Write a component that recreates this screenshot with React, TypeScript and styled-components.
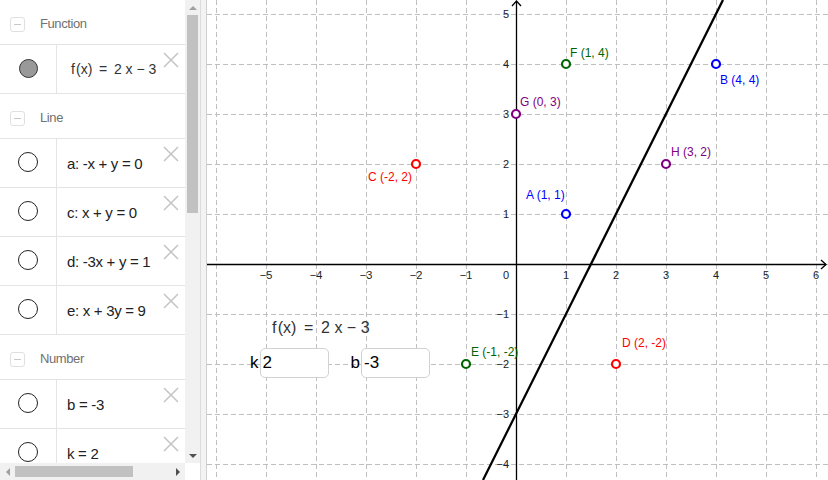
import React from 'react'
import styled, { createGlobalStyle } from 'styled-components'

const GlobalStyle = createGlobalStyle`
  html, body {
    margin: 0;
    padding: 0;
  }
  body {
    width: 828px;
    height: 480px;
    overflow: hidden;
    background: #fff;
    font-family: 'Liberation Sans', Arial, sans-serif;
  }
`

type Item = { label: string; filled?: boolean }
type Group = { title: string; items: Item[] }

// GeoGebra style formula spacing: hair / thin spaces between the tokens
const FORMULA = 'f\u200A(x) \u2009= \u20092 x − 3'

const groups: Group[] = [
  { title: 'Function', items: [{ label: FORMULA, filled: true }] },
  {
    title: 'Line',
    items: [{ label: 'a: -x + y = 0' }, { label: 'c: x + y = 0' }, { label: 'd: -3x + y = 1' }, { label: 'e: x + 3y = 9' }],
  },
  { title: 'Number', items: [{ label: 'b = -3' }, { label: 'k = 2' }] },
]

// graph coordinates -> page pixels
const px = (x: number) => 516 + 50 * x
const py = (y: number) => 264 - 50 * y

type Pt = { name: string; x: number; y: number; color: string; dx: number; dy: number }

const points: Pt[] = [
  { name: 'A', x: 1, y: 1, color: '#0000ff', dx: -40, dy: -15 },
  { name: 'B', x: 4, y: 4, color: '#0000ff', dx: 4, dy: 20 },
  { name: 'C', x: -2, y: 2, color: '#ff0000', dx: -48, dy: 17 },
  { name: 'D', x: 2, y: -2, color: '#ff0000', dx: 6, dy: -17 },
  { name: 'E', x: -1, y: -2, color: '#006400', dx: 5, dy: -8 },
  { name: 'F', x: 1, y: 4, color: '#006400', dx: 4, dy: -7 },
  { name: 'G', x: 0, y: 3, color: '#800080', dx: 4, dy: -8 },
  { name: 'H', x: 3, y: 2, color: '#800080', dx: 5, dy: -8 },
]

const fmt = (n: number) => (n < 0 ? `-${-n}` : `${n}`)
const axisNum = (n: number) => (n < 0 ? `\u2212${-n}` : `${n}`)

function Graph() {
  const xs = [-6, -5, -4, -3, -2, -1, 0, 1, 2, 3, 4, 5, 6]
  const ys = [5, 4, 3, 2, 1, 0, -1, -2, -3, -4]
  return (
    <svg width="621" height="480" viewBox="207 0 621 480">
      <g stroke="#c0c0c0" strokeWidth="1" strokeDasharray="5 3">
        {xs.map((x) => (
          <line key={`vx${x}`} x1={px(x) + 0.5} y1={0} x2={px(x) + 0.5} y2={480} />
        ))}
        {ys.map((y) => (
          <line key={`hy${y}`} x1={207} y1={py(y) + 0.5} x2={828} y2={py(y) + 0.5} />
        ))}
      </g>
      <g stroke="#000" strokeWidth="1.3" fill="none">
        <line x1={207} y1={264.5} x2={826} y2={264.5} />
        <line x1={516.5} y1={1} x2={516.5} y2={480} />
        <polyline points="821,260 826,264.5 821,269" />
        <polyline points="512,6 516.5,1 521,6" />
      </g>
      <g fontFamily="'Liberation Sans', Arial, sans-serif" fontSize="11" fill="#222">
        {xs
          .filter((x) => x !== 0 && x !== -6)
          .map((x) => (
            <text key={`lx${x}`} x={px(x)} y={279} textAnchor="middle">
              {axisNum(x)}
            </text>
          ))}
        <text x={509} y={279} textAnchor="end">
          0
        </text>
        {ys
          .filter((y) => y !== 0)
          .map((y) => (
            <text key={`ly${y}`} x={509} y={py(y) + 4} textAnchor="end">
              {axisNum(y)}
            </text>
          ))}
      </g>
      <line x1={px(-0.66)} y1={py(-4.32)} x2={px(4.14)} y2={py(5.28)} stroke="#000" strokeWidth="2.3" />
      <g fontFamily="'Liberation Sans', Arial, sans-serif" fontSize="12">
        {points.map((p) => (
          <g key={p.name}>
            <circle cx={px(p.x)} cy={py(p.y)} r="4" fill="#fff" stroke={p.color} strokeWidth="2.2" />
            <text x={px(p.x) + p.dx} y={py(p.y) + p.dy} fill={p.color}>
              {`${p.name} (${fmt(p.x)}, ${fmt(p.y)})`}
            </text>
          </g>
        ))}
      </g>
    </svg>
  )
}

function CloseIcon() {
  return (
    <svg width="16" height="16" viewBox="0 0 16 16">
      <path d="M1 1 L15 15 M15 1 L1 15" stroke="#c4c4c4" strokeWidth="1.5" fill="none" />
    </svg>
  )
}

export default function App() {
  return (
    <>
      <GlobalStyle />
      <Screen>
        <Sidebar>
          <SidebarBody>
            <AlgebraList>
              {groups.map((g) => (
                <React.Fragment key={g.title}>
                  <GroupHeader>
                    <CollapseBox />
                    <GroupTitle>{g.title}</GroupTitle>
                  </GroupHeader>
                  {g.items.map((it) => (
                    <ItemRow key={it.label}>
                      <MarbleCell>
                        <Marble $filled={it.filled} />
                      </MarbleCell>
                      <ItemText $math={it.filled}>{it.label}</ItemText>
                      <DeleteButton>
                        <CloseIcon />
                      </DeleteButton>
                    </ItemRow>
                  ))}
                </React.Fragment>
              ))}
            </AlgebraList>
            <VScroll>
              <ArrowCell>
                <Arrow $dir="up" />
              </ArrowCell>
              <VThumb />
              <VTrackRest />
              <ArrowCell>
                <Arrow $dir="down" />
              </ArrowCell>
            </VScroll>
          </SidebarBody>
          <HScrollRow>
            <HScroll>
              <ArrowCell>
                <Arrow $dir="left" />
              </ArrowCell>
              <HThumb />
              <HTrackRest />
              <ArrowCell>
                <Arrow $dir="right" />
              </ArrowCell>
            </HScroll>
            <Corner />
          </HScrollRow>
        </Sidebar>
        <Splitter />
        <GraphView>
          <Graph />
          <CanvasFormula>{FORMULA}</CanvasFormula>
          <InputRow>
            <InputLabel>k</InputLabel>
            <InputBox>2</InputBox>
            <InputLabel $gap>b</InputLabel>
            <InputBox>-3</InputBox>
          </InputRow>
        </GraphView>
      </Screen>
    </>
  )
}

const Screen = styled.div`
  display: flex;
  width: 828px;
  height: 480px;
  overflow: hidden;
`

const Sidebar = styled.div`
  width: 200px;
  height: 480px;
  display: flex;
  flex-direction: column;
  flex-shrink: 0;
`

const SidebarBody = styled.div`
  display: flex;
  height: 463px;
`

const AlgebraList = styled.div`
  width: 185px;
  height: 463px;
  overflow: hidden;
  background: #fff;
`

const GroupHeader = styled.div`
  box-sizing: border-box;
  display: flex;
  align-items: center;
  height: 45px;
  padding: 3px 0 0 10px;
  border-bottom: 1px solid #e4e4e4;
`

const CollapseBox = styled.div`
  position: relative;
  width: 13px;
  height: 13px;
  border: 1px solid #e0e0e0;
  border-radius: 3px;
  margin-top: 1px;
  &::after {
    content: '';
    position: absolute;
    left: 3px;
    top: 6px;
    width: 7px;
    height: 1px;
    background: #c8c8c8;
  }
`

const GroupTitle = styled.span`
  margin-left: 15px;
  font-family: 'Liberation Sans', Arial, sans-serif;
  font-size: 13px;
  letter-spacing: -0.4px;
  color: #707070;
`

const ItemRow = styled.div`
  display: flex;
  height: 48px;
  border-bottom: 1px solid #e4e4e4;
`

const MarbleCell = styled.div`
  width: 56px;
  flex-shrink: 0;
  display: flex;
  align-items: center;
  justify-content: center;
  border-right: 1px solid #e4e4e4;
`

const Marble = styled.div<{ $filled?: boolean }>`
  width: ${(p) => (p.$filled ? '17px' : '18px')};
  height: ${(p) => (p.$filled ? '17px' : '18px')};
  border-radius: 50%;
  border: ${(p) => (p.$filled ? '1.5px solid #333' : '1px solid #222')};
  background: ${(p) => (p.$filled ? '#999' : '#fff')};
  margin-top: -2px;
`

const ItemText = styled.div<{ $math?: boolean }>`
  flex: 1;
  min-width: 0;
  display: flex;
  align-items: center;
  padding-left: ${(p) => (p.$math ? '14px' : '10px')};
  font-family: 'Liberation Sans', Arial, sans-serif;
  font-size: ${(p) => (p.$math ? '14px' : '15px')};
  letter-spacing: ${(p) => (p.$math ? '0' : '-0.3px')};
  color: ${(p) => (p.$math ? '#333' : '#222')};
  white-space: pre;
`

const DeleteButton = styled.div`
  width: 16px;
  height: 16px;
  margin: 7px 6px 0 0;
  flex-shrink: 0;
`

const VScroll = styled.div`
  width: 15px;
  display: flex;
  flex-direction: column;
  background: #f1f1f1;
`

const ArrowCell = styled.div`
  width: 15px;
  height: 15px;
  display: flex;
  align-items: center;
  justify-content: center;
  flex-shrink: 0;
`

const Arrow = styled.div<{ $dir: 'up' | 'down' | 'left' | 'right' }>`
  width: 0;
  height: 0;
  border: 4px solid transparent;
  ${(p) =>
    p.$dir === 'up'
      ? 'border-bottom-color: #a0a0a0; border-top-width: 0; border-bottom-width: 4px;'
      : p.$dir === 'down'
      ? 'border-top-color: #505050; border-bottom-width: 0; border-top-width: 4px;'
      : p.$dir === 'left'
      ? 'border-right-color: #a0a0a0; border-left-width: 0; border-top-width: 4px; border-bottom-width: 4px;'
      : 'border-left-color: #505050; border-right-width: 0; border-top-width: 4px; border-bottom-width: 4px;'}
`

const VThumb = styled.div`
  height: 198px;
  margin: 0 2px;
  background: #c1c1c1;
`

const VTrackRest = styled.div`
  flex: 1;
`

const HScrollRow = styled.div`
  display: flex;
  height: 17px;
`

const HScroll = styled.div`
  width: 185px;
  display: flex;
  align-items: center;
  background: #f1f1f1;
`

const HThumb = styled.div`
  width: 118px;
  height: 11px;
  background: #c1c1c1;
`

const HTrackRest = styled.div`
  flex: 1;
`

const Corner = styled.div`
  width: 15px;
  background: #fff;
`

const Splitter = styled.div`
  width: 5px;
  height: 480px;
  flex-shrink: 0;
  background: #f3f3f3;
  border-left: 1px solid #dcdcdc;
  border-right: 1px solid #cfcfcf;
`

const GraphView = styled.div`
  position: relative;
  width: 621px;
  height: 480px;
  background: #fff;
  svg {
    display: block;
  }
`

const CanvasFormula = styled.div`
  position: absolute;
  left: 65px;
  top: 319px;
  font-family: 'Liberation Sans', Arial, sans-serif;
  font-size: 16px;
  color: #333;
  white-space: pre;
`

const InputRow = styled.div`
  position: absolute;
  left: 43px;
  top: 348px;
  display: flex;
  align-items: center;
`

const InputLabel = styled.span<{ $gap?: boolean }>`
  font-family: 'Liberation Sans', Arial, sans-serif;
  font-size: 17px;
  color: #000;
  margin-left: ${(p) => (p.$gap ? '22px' : '0')};
  margin-right: 1px;
`

const InputBox = styled.div`
  box-sizing: border-box;
  width: 69px;
  height: 30px;
  padding-left: 2px;
  display: flex;
  align-items: center;
  border: 1px solid #d2d2d2;
  border-radius: 5px;
  background: #fff;
  font-family: 'Liberation Sans', Arial, sans-serif;
  font-size: 17px;
  color: #000;
`
